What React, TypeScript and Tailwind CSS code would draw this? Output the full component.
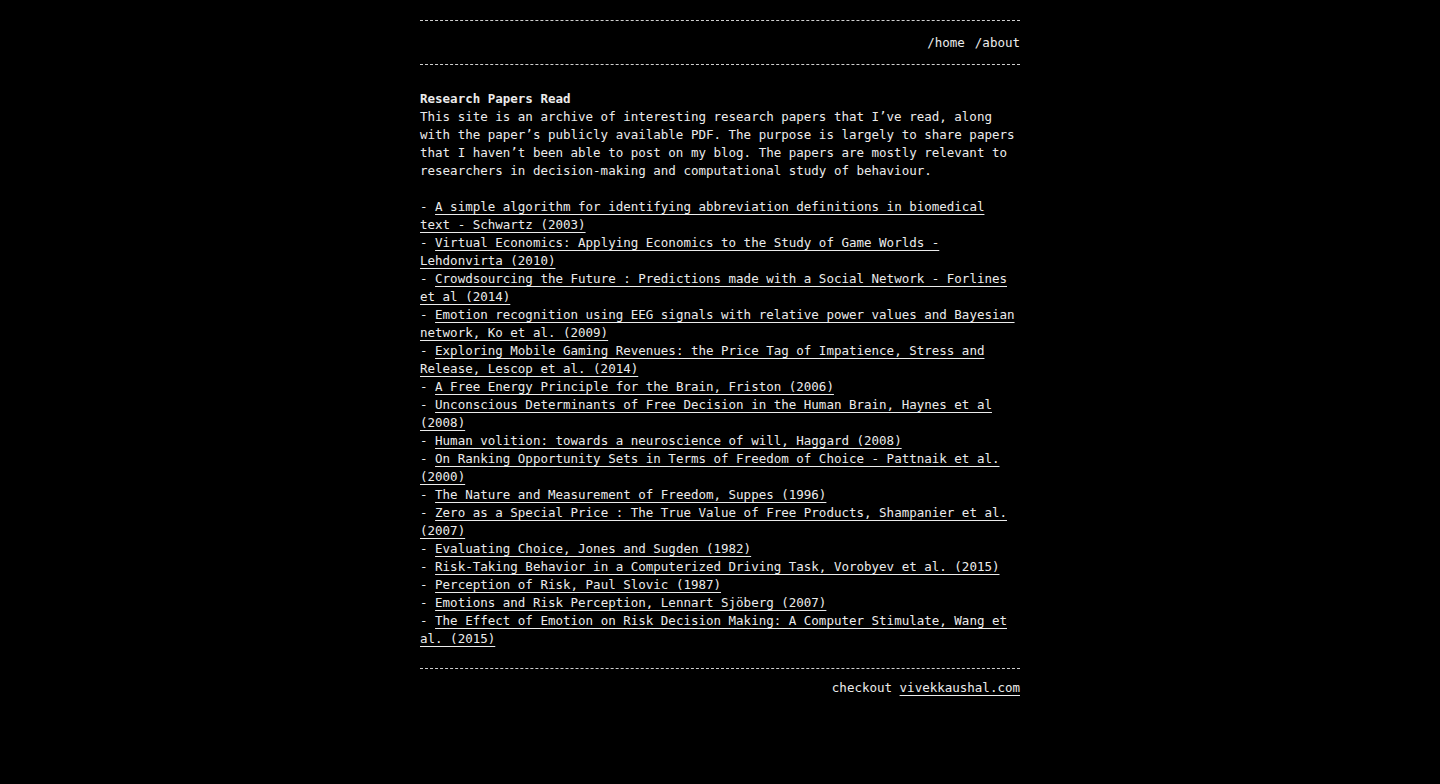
import React from "react";

const papers: string[] = [
  "A simple algorithm for identifying abbreviation definitions in biomedical text - Schwartz (2003)",
  "Virtual Economics: Applying Economics to the Study of Game Worlds - Lehdonvirta (2010)",
  "Crowdsourcing the Future : Predictions made with a Social Network - Forlines et al (2014)",
  "Emotion recognition using EEG signals with relative power values and Bayesian network, Ko et al. (2009)",
  "Exploring Mobile Gaming Revenues: the Price Tag of Impatience, Stress and Release, Lescop et al. (2014)",
  "A Free Energy Principle for the Brain, Friston (2006)",
  "Unconscious Determinants of Free Decision in the Human Brain, Haynes et al (2008)",
  "Human volition: towards a neuroscience of will, Haggard (2008)",
  "On Ranking Opportunity Sets in Terms of Freedom of Choice - Pattnaik et al. (2000)",
  "The Nature and Measurement of Freedom, Suppes (1996)",
  "Zero as a Special Price : The True Value of Free Products, Shampanier et al. (2007)",
  "Evaluating Choice, Jones and Sugden (1982)",
  "Risk-Taking Behavior in a Computerized Driving Task, Vorobyev et al. (2015)",
  "Perception of Risk, Paul Slovic (1987)",
  "Emotions and Risk Perception, Lennart Sjöberg (2007)",
  "The Effect of Emotion on Risk Decision Making: A Computer Stimulate, Wang et al. (2015)",
];

export default function App() {
  return (
    <div
      className="min-h-[784px] w-full bg-black text-[#ececec] text-[12.5px] leading-[18px]"
      style={{ fontFamily: '"DejaVu Sans Mono", "Liberation Mono", monospace' }}
    >
      <div className="mx-auto w-[600px] pt-[20px]">
        <div className="border-t border-b border-dashed border-[#cfcfcf] pt-[13px] pb-[12px] flex justify-end gap-[10px]">
          <a href="#">/home</a>
          <a href="#">/about</a>
        </div>
        <div className="mt-[25px]">
          <div className="font-bold">Research Papers Read</div>
          <p>
            This site is an archive of interesting research papers that I’ve read, along with the paper’s publicly available PDF. The purpose is largely to share papers that I haven’t been able to post on my blog. The papers are mostly relevant to researchers in decision-making and computational study of behaviour.
          </p>
          <ul className="mt-[18px]">
            {papers.map((p) => (
              <li key={p}>
                -{" "}
                <a href="#" className="underline underline-offset-[3px]">
                  {p}
                </a>
              </li>
            ))}
          </ul>
        </div>
        <div className="mt-[20px] border-t border-dashed border-[#cfcfcf] pt-[10px] text-right">
          checkout{" "}
          <a href="#" className="underline underline-offset-[3px]">
            vivekkaushal.com
          </a>
        </div>
      </div>
    </div>
  );
}
